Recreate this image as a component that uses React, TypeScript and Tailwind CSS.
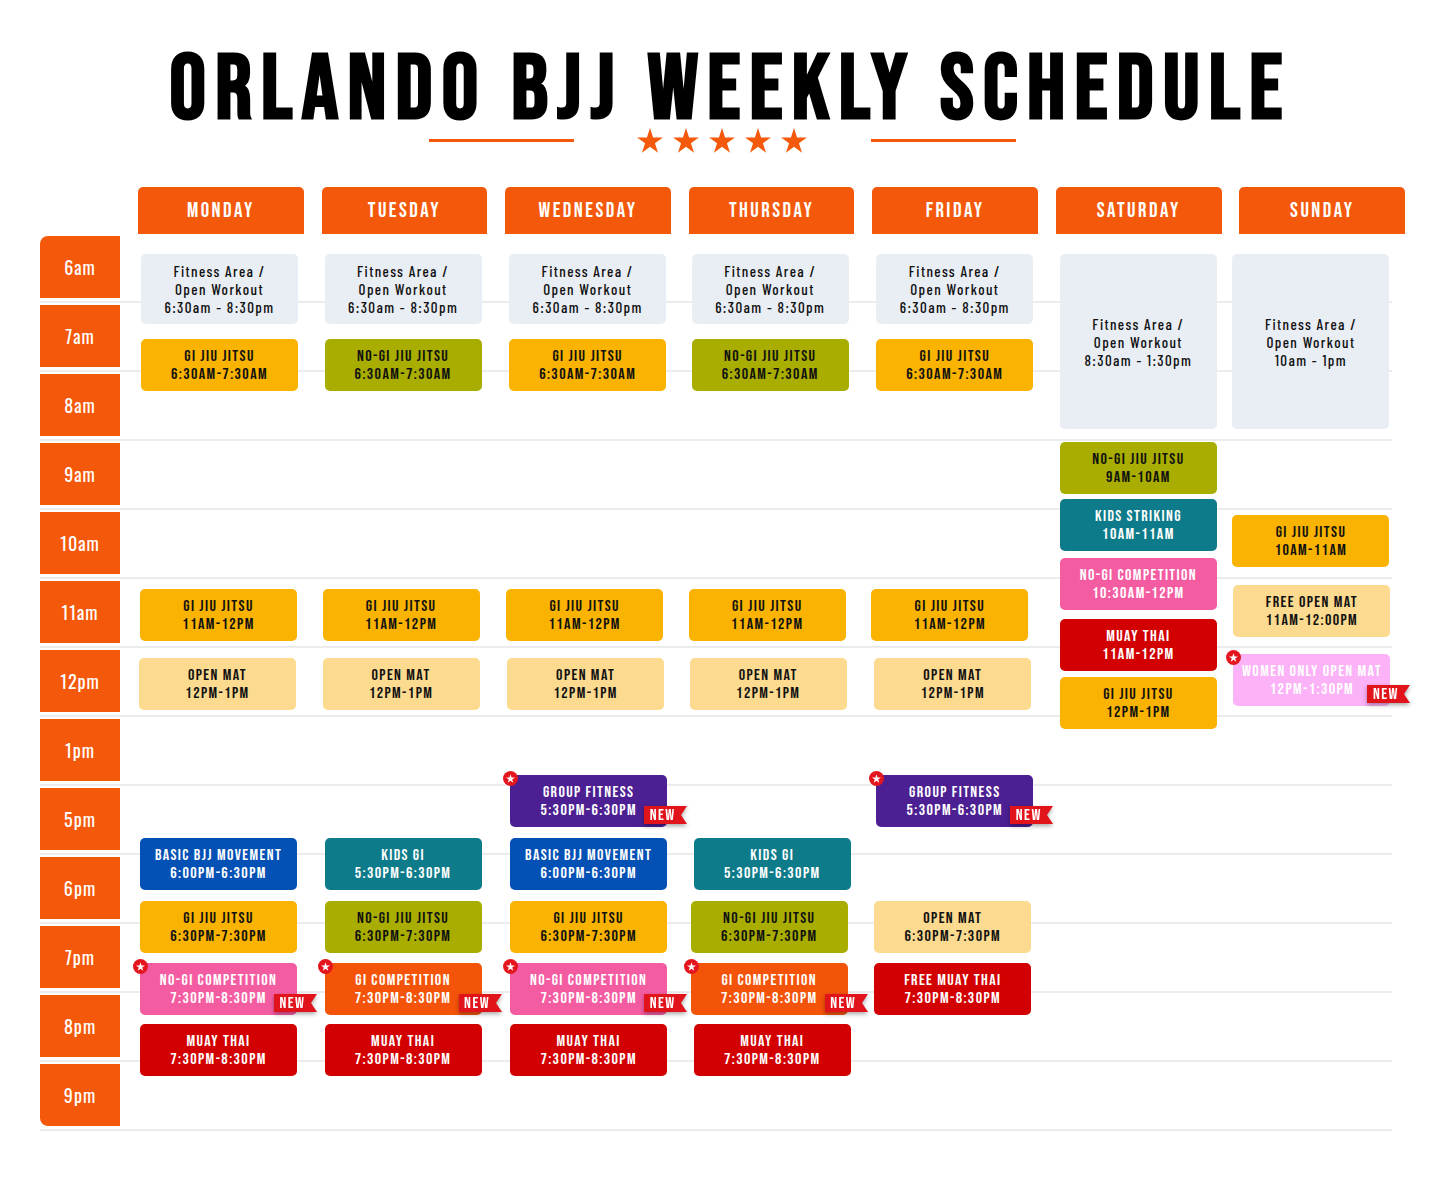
import React from "react";

type Card = {
  lines: string[];
  bg: string;
  text: string;
  cls: string;
  star?: boolean;
  isNew?: boolean;
  mixed?: boolean;
};

const GRAY = "bg-[#e9edf4]";
const AMBER = "bg-[#f9b300]";
const OLIVE = "bg-[#a8ad00]";
const LIGHT = "bg-[#fcda8f]";
const BLUE = "bg-[#0451b5]";
const TEAL = "bg-[#0d7b8a]";
const PINK = "bg-[#f45ca2]";
const RED = "bg-[#d20000]";
const ORANGE = "bg-[#f35409]";
const PURPLE = "bg-[#4c2092]";
const LPINK = "bg-[#fbb2f6]";
const DARK = "text-[#111111]";
const WHITE = "text-white";

const fit = (t: string) => ["Fitness Area /", "Open Workout", t];

const days: { name: string; cards: Card[] }[] = [
  {
    name: "MONDAY",
    cards: [
      { lines: fit("6:30am - 8:30pm"), bg: GRAY, text: DARK, cls: "mt-[18px] ml-[3px] h-[70px]", mixed: true },
      { lines: ["GI JIU JITSU", "6:30AM-7:30AM"], bg: AMBER, text: DARK, cls: "mt-[15px] ml-[3px] h-[52px]" },
      { lines: ["GI JIU JITSU", "11AM-12PM"], bg: AMBER, text: DARK, cls: "mt-[198px] ml-[2px] h-[52px]" },
      { lines: ["OPEN MAT", "12PM-1PM"], bg: LIGHT, text: DARK, cls: "mt-[17px] ml-[1px] h-[52px]" },
      { lines: ["BASIC BJJ MOVEMENT", "6:00PM-6:30PM"], bg: BLUE, text: WHITE, cls: "mt-[128px] ml-[2px] h-[52px]" },
      { lines: ["GI JIU JITSU", "6:30PM-7:30PM"], bg: AMBER, text: DARK, cls: "mt-[11px] ml-[2px] h-[52px]" },
      { lines: ["NO-GI COMPETITION", "7:30PM-8:30PM"], bg: PINK, text: WHITE, cls: "mt-[10px] ml-[2px] h-[52px]", star: true, isNew: true },
      { lines: ["MUAY THAI", "7:30PM-8:30PM"], bg: RED, text: WHITE, cls: "mt-[9px] ml-[2px] h-[52px]" },
    ],
  },
  {
    name: "TUESDAY",
    cards: [
      { lines: fit("6:30am - 8:30pm"), bg: GRAY, text: DARK, cls: "mt-[18px] ml-[3px] h-[70px]", mixed: true },
      { lines: ["NO-GI JIU JITSU", "6:30AM-7:30AM"], bg: OLIVE, text: DARK, cls: "mt-[15px] ml-[3px] h-[52px]" },
      { lines: ["GI JIU JITSU", "11AM-12PM"], bg: AMBER, text: DARK, cls: "mt-[198px] ml-[1px] h-[52px]" },
      { lines: ["OPEN MAT", "12PM-1PM"], bg: LIGHT, text: DARK, cls: "mt-[17px] ml-[1px] h-[52px]" },
      { lines: ["KIDS GI", "5:30PM-6:30PM"], bg: TEAL, text: WHITE, cls: "mt-[128px] ml-[3px] h-[52px]" },
      { lines: ["NO-GI JIU JITSU", "6:30PM-7:30PM"], bg: OLIVE, text: DARK, cls: "mt-[11px] ml-[3px] h-[52px]" },
      { lines: ["GI COMPETITION", "7:30PM-8:30PM"], bg: ORANGE, text: WHITE, cls: "mt-[10px] ml-[3px] h-[52px]", star: true, isNew: true },
      { lines: ["MUAY THAI", "7:30PM-8:30PM"], bg: RED, text: WHITE, cls: "mt-[9px] ml-[3px] h-[52px]" },
    ],
  },
  {
    name: "WEDNESDAY",
    cards: [
      { lines: fit("6:30am - 8:30pm"), bg: GRAY, text: DARK, cls: "mt-[18px] ml-[4px] h-[70px]", mixed: true },
      { lines: ["GI JIU JITSU", "6:30AM-7:30AM"], bg: AMBER, text: DARK, cls: "mt-[15px] ml-[4px] h-[52px]" },
      { lines: ["GI JIU JITSU", "11AM-12PM"], bg: AMBER, text: DARK, cls: "mt-[198px] ml-[1px] h-[52px]" },
      { lines: ["OPEN MAT", "12PM-1PM"], bg: LIGHT, text: DARK, cls: "mt-[17px] ml-[2px] h-[52px]" },
      { lines: ["GROUP FITNESS", "5:30PM-6:30PM"], bg: PURPLE, text: WHITE, cls: "mt-[65px] ml-[5px] h-[52px]", star: true, isNew: true },
      { lines: ["BASIC BJJ MOVEMENT", "6:00PM-6:30PM"], bg: BLUE, text: WHITE, cls: "mt-[11px] ml-[5px] h-[52px]" },
      { lines: ["GI JIU JITSU", "6:30PM-7:30PM"], bg: AMBER, text: DARK, cls: "mt-[11px] ml-[5px] h-[52px]" },
      { lines: ["NO-GI COMPETITION", "7:30PM-8:30PM"], bg: PINK, text: WHITE, cls: "mt-[10px] ml-[5px] h-[52px]", star: true, isNew: true },
      { lines: ["MUAY THAI", "7:30PM-8:30PM"], bg: RED, text: WHITE, cls: "mt-[9px] ml-[5px] h-[52px]" },
    ],
  },
  {
    name: "THURSDAY",
    cards: [
      { lines: fit("6:30am - 8:30pm"), bg: GRAY, text: DARK, cls: "mt-[18px] ml-[3px] h-[70px]", mixed: true },
      { lines: ["NO-GI JIU JITSU", "6:30AM-7:30AM"], bg: OLIVE, text: DARK, cls: "mt-[15px] ml-[3px] h-[52px]" },
      { lines: ["GI JIU JITSU", "11AM-12PM"], bg: AMBER, text: DARK, cls: "mt-[198px] ml-[0px] h-[52px]" },
      { lines: ["OPEN MAT", "12PM-1PM"], bg: LIGHT, text: DARK, cls: "mt-[17px] ml-[1px] h-[52px]" },
      { lines: ["KIDS GI", "5:30PM-6:30PM"], bg: TEAL, text: WHITE, cls: "mt-[128px] ml-[5px] h-[52px]" },
      { lines: ["NO-GI JIU JITSU", "6:30PM-7:30PM"], bg: OLIVE, text: DARK, cls: "mt-[11px] ml-[2px] h-[52px]" },
      { lines: ["GI COMPETITION", "7:30PM-8:30PM"], bg: ORANGE, text: WHITE, cls: "mt-[10px] ml-[2px] h-[52px]", star: true, isNew: true },
      { lines: ["MUAY THAI", "7:30PM-8:30PM"], bg: RED, text: WHITE, cls: "mt-[9px] ml-[5px] h-[52px]" },
    ],
  },
  {
    name: "FRIDAY",
    cards: [
      { lines: fit("6:30am - 8:30pm"), bg: GRAY, text: DARK, cls: "mt-[18px] ml-[4px] h-[70px]", mixed: true },
      { lines: ["GI JIU JITSU", "6:30AM-7:30AM"], bg: AMBER, text: DARK, cls: "mt-[15px] ml-[4px] h-[52px]" },
      { lines: ["GI JIU JITSU", "11AM-12PM"], bg: AMBER, text: DARK, cls: "mt-[198px] -ml-[1px] h-[52px]" },
      { lines: ["OPEN MAT", "12PM-1PM"], bg: LIGHT, text: DARK, cls: "mt-[17px] ml-[2px] h-[52px]" },
      { lines: ["GROUP FITNESS", "5:30PM-6:30PM"], bg: PURPLE, text: WHITE, cls: "mt-[65px] ml-[4px] h-[52px]", star: true, isNew: true },
      { lines: ["OPEN MAT", "6:30PM-7:30PM"], bg: LIGHT, text: DARK, cls: "mt-[74px] ml-[2px] h-[52px]" },
      { lines: ["FREE MUAY THAI", "7:30PM-8:30PM"], bg: RED, text: WHITE, cls: "mt-[10px] ml-[2px] h-[52px]" },
    ],
  },
  {
    name: "SATURDAY",
    cards: [
      { lines: fit("8:30am - 1:30pm"), bg: GRAY, text: DARK, cls: "mt-[18px] ml-[4px] h-[175px]", mixed: true },
      { lines: ["NO-GI JIU JITSU", "9AM-10AM"], bg: OLIVE, text: DARK, cls: "mt-[13px] ml-[4px] h-[52px]" },
      { lines: ["KIDS STRIKING", "10AM-11AM"], bg: TEAL, text: WHITE, cls: "mt-[5px] ml-[4px] h-[52px]" },
      { lines: ["NO-GI COMPETITION", "10:30AM-12PM"], bg: PINK, text: WHITE, cls: "mt-[7px] ml-[4px] h-[52px]" },
      { lines: ["MUAY THAI", "11AM-12PM"], bg: RED, text: WHITE, cls: "mt-[9px] ml-[4px] h-[52px]" },
      { lines: ["GI JIU JITSU", "12PM-1PM"], bg: AMBER, text: DARK, cls: "mt-[6px] ml-[4px] h-[52px]" },
    ],
  },
  {
    name: "SUNDAY",
    cards: [
      { lines: fit("10am - 1pm"), bg: GRAY, text: DARK, cls: "mt-[18px] -ml-[7px] h-[175px]", mixed: true },
      { lines: ["GI JIU JITSU", "10AM-11AM"], bg: AMBER, text: DARK, cls: "mt-[86px] -ml-[7px] h-[52px]" },
      { lines: ["FREE OPEN MAT", "11AM-12:00PM"], bg: LIGHT, text: DARK, cls: "mt-[18px] -ml-[6px] h-[52px]" },
      { lines: ["WOMEN ONLY OPEN MAT", "12PM-1:30PM"], bg: LPINK, text: WHITE, cls: "mt-[17px] -ml-[6px] h-[52px]", star: true, isNew: true },
    ],
  },
];

const times = ["6am", "7am", "8am", "9am", "10am", "11am", "12pm", "1pm", "5pm", "6pm", "7pm", "8pm", "9pm"];

const BEBAS = "font-['Bebas_Neue','Oswald','Liberation_Sans',sans-serif]";
const OSWALD = "font-['Oswald','Liberation_Sans',sans-serif]";
const BARLOW = "font-['Barlow_Condensed','Oswald','Liberation_Sans',sans-serif]";

function Star({ className }: { className?: string }) {
  return (
    <svg viewBox="1 0.5 22 21" className={className}>
      <polygon
        points="12,0.5 14.58,8.45 22.94,8.45 16.18,13.36 18.76,21.3 12,16.39 5.24,21.3 7.82,13.36 1.06,8.45 9.42,8.45"
        fill="currentColor"
      />
    </svg>
  );
}

function Badge() {
  return (
    <div className="absolute -left-[7px] -top-[4px] w-[15px] h-[15px] rounded-full bg-[#e3161e] flex items-center justify-center">
      <Star className="w-[9px] h-[9px] text-white" />
    </div>
  );
}

function Ribbon() {
  return (
    <div className="absolute left-[calc(100%-23px)] top-[31px] w-[43px] h-[18px] flex items-center drop-shadow-[0_2px_2px_rgba(0,0,0,0.35)]">
      <svg viewBox="0 0 43 18" className="absolute inset-0 w-[43px] h-[18px]">
        <polygon points="0,0 43,0 37,9 43,18 0,18" fill="#e1141c" />
      </svg>
      <div className="relative w-[37px] flex justify-center pt-[1px]">
        <span className={`${BEBAS} text-white text-[16px] leading-[18px] tracking-[1.5px]`}>NEW</span>
      </div>
    </div>
  );
}

function CardBox({ c }: { c: Card }) {
  return (
    <div className={`relative shrink-0 w-[157px] rounded-[5px] flex items-center justify-center ${c.bg} ${c.cls}`}>
      <div
        className={`whitespace-nowrap text-center leading-[18px] ${c.text} ${
          c.mixed ? `${BARLOW} text-[15px] tracking-[1.4px] font-medium` : `${BEBAS} text-[16px] tracking-[1.4px] pt-[1px]`
        }`}
      >
        {c.lines.map((l) => (
          <div key={l}>{l}</div>
        ))}
      </div>
      {c.star && <Badge />}
      {c.isNew && <Ribbon />}
    </div>
  );
}

export default function App() {
  return (
    <div className="w-full min-h-[1177px] bg-white overflow-hidden">
      <div className="pt-[52px] flex flex-col items-center">
        <div className="h-[78px] flex items-center justify-center pl-[16px]">
          <h1 className={`${BEBAS} whitespace-nowrap text-[91px] leading-[78px] font-bold tracking-[9.2px] text-black`}>
            ORLANDO BJJ WEEKLY SCHEDULE
          </h1>
        </div>
        <div className="-mt-[3px] h-[26px] flex items-center">
          <div className="w-[145px] h-[3px] bg-[#f4590b]" />
          <div className="ml-[63px] mr-[64px] flex gap-[10px] text-[#f4590b]">
            {[0, 1, 2, 3, 4].map((i) => (
              <Star key={i} className="w-[26px] h-[25px]" />
            ))}
          </div>
          <div className="w-[145px] h-[3px] bg-[#f4590b]" />
        </div>
      </div>

      <div className="mt-[34px] pl-[40px]">
        <div className="flex pl-[98px] gap-[17.9px]">
          {days.map((d) => (
            <div
              key={d.name}
              className="w-[165.7px] h-[47px] shrink-0 rounded-t-[5px] bg-[#f4590b] flex items-center justify-center"
            >
              <span className={`${BEBAS} whitespace-nowrap text-white text-[21px] tracking-[2.5px] pt-[1px]`}>{d.name}</span>
            </div>
          ))}
        </div>

        <div className="mt-[2px] grid">
          <div className="col-start-1 row-start-1 flex flex-col">
            {times.map((t, i) => (
              <div key={t} className="flex flex-col">
                <div
                  className={`w-[80px] h-[62px] bg-[#f4590b] flex items-center justify-center ${i === 0 ? "rounded-tl-[8px]" : ""} ${
                    i === times.length - 1 ? "rounded-bl-[8px]" : ""
                  }`}
                >
                  <span className={`${OSWALD} text-white text-[18px] tracking-[1px]`}>{t}</span>
                </div>
                <div className="h-[7px] flex items-center">
                  <div className="w-[1352px] h-[2px] bg-[#ececec]" />
                </div>
              </div>
            ))}
          </div>
          <div className="col-start-1 row-start-1 flex items-start pl-[98px] gap-[17.9px]">
            {days.map((d) => (
              <div key={d.name} className="w-[165.7px] shrink-0 flex flex-col">
                {d.cards.map((c, i) => (
                  <CardBox key={i} c={c} />
                ))}
              </div>
            ))}
          </div>
        </div>
      </div>
    </div>
  );
}
